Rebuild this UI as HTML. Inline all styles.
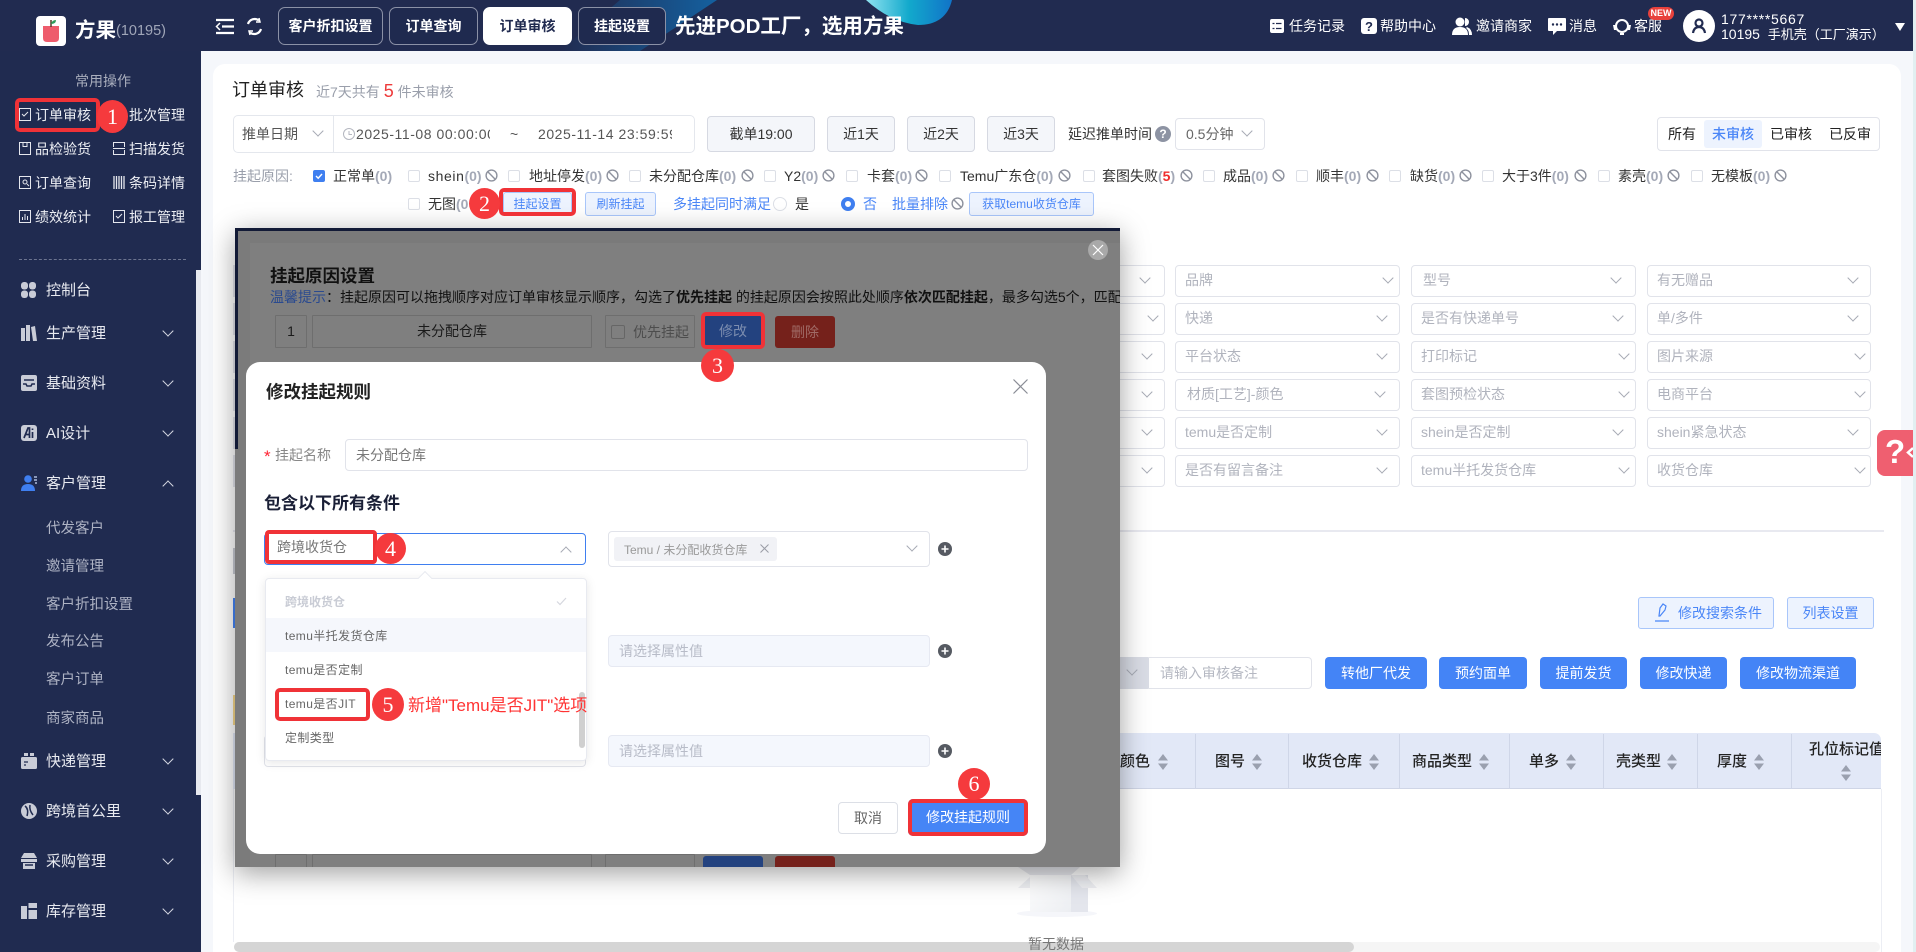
<!DOCTYPE html>
<html lang="zh-CN"><head><meta charset="utf-8"><title>订单审核</title>
<style>
*{box-sizing:border-box;margin:0;padding:0}
html,body{width:1916px;height:952px;overflow:hidden;background:#f5f7fb;font-family:"Liberation Sans","Noto Sans CJK SC",sans-serif;font-size:14px;color:#333}
#root{position:absolute;left:0;top:0;width:1916px;height:952px;overflow:hidden}
.a{position:absolute}
.t{position:absolute;white-space:nowrap;line-height:20px;height:20px}
em{font-style:normal;color:#a4a9b7;font-weight:700}
em.r{color:#f02d2d}
.ch{position:absolute;width:8px;height:8px;border-right:1px solid #a6aab4;border-bottom:1px solid #a6aab4;transform:rotate(45deg)}
.ch.w{border-color:#d5d8e2;border-width:1.5px}
.ch.u{transform:rotate(225deg)}
.side{color:#e8eaf0}
.menu{font-size:15px;left:46px;color:#e8eaf0;margin-top:1px}
.sub{left:46px;color:#aeb3c4;font-size:14.5px;margin-top:1px}
.qk{color:#eceef3}
.tab{position:absolute;top:7px;height:38px;border:1px solid #8b91a6;border-radius:7px;background:#1f2a4f;color:#fff;font-weight:700;text-align:center;line-height:36px}
.hd{color:#fff;top:16px}
.cb{position:absolute;width:12px;height:12px;border:1px solid #dcdfe6;border-radius:2px;background:#fff;top:4px}
.ban{position:absolute;width:13px;height:13px;top:3px}
.btn{position:absolute;top:116px;height:36px;background:#f4f6fa;border:1px solid #d6d9e2;border-radius:4px;text-align:center;line-height:34px;color:#333}
.lb{position:absolute;border:1px solid #a9c6fa;background:#edf3fe;border-radius:3px;color:#4a86f7;text-align:center}
.sel{position:absolute;height:32px;background:#fff;border:1px solid #e1e3ea;border-radius:4px;line-height:29px;padding-left:9px;color:#b0b3bd}
.bb{position:absolute;top:657px;height:32px;background:#4484f6;border-radius:4px;color:#fff;text-align:center;line-height:32px}
.th{top:752px;color:#222;font-weight:500;font-size:15px}
.sep{position:absolute;top:734px;width:1px;height:55px;background:#cfd6e8}
.so{position:absolute;width:10px;height:16px;top:754px}
.red{position:absolute;border:4px solid #f03237;border-radius:5px}
.num{position:absolute;background:#f53a3d;border-radius:50%;color:#fff;font-family:"Liberation Serif",serif;text-align:center;font-size:22px}
.box{position:absolute;border:1px solid #6e6e6e;text-align:center;color:#1a1a1a;line-height:31px;border-radius:1px}
.ph{position:absolute;left:608px;width:322px;height:32px;background:#f4f7fd;border:1px solid #e6e9f2;border-radius:4px;color:#b8bcc8;line-height:30px;padding-left:10px}
.pl{position:absolute;left:938px;width:14px;height:14px}
.op{position:absolute;left:285px;color:#666;font-size:12px;letter-spacing:.4px}
</style></head><body><div id="root">
<svg width="0" height="0" style="position:absolute">
<symbol id="ban" viewBox="0 0 13 13"><circle cx="6.5" cy="6.5" r="5.4" fill="none" stroke="#8e929e" stroke-width="1.4"/><path d="M2.8 2.8l7.4 7.4" stroke="#8e929e" stroke-width="1.4"/></symbol>
<symbol id="so" viewBox="0 0 10 16"><path d="M5 0l5 6.500H0zM5 16L0 9.500h10z" fill="#9aa0af"/></symbol>
<symbol id="pl" viewBox="0 0 14 14"><circle cx="7" cy="7" r="7" fill="#565a62"/><path d="M7 3.500v7M3.500 7h7" stroke="#fff" stroke-width="1.600"/></symbol>
</svg>

<!-- header -->
<div class="a" style="left:0;top:0;width:1913px;height:51px;background:#212b50"></div>
<svg class="a" style="left:0;top:0" width="1000" height="51"><defs>
<linearGradient id="g1" x1="0" x2="1" y1="0" y2="0"><stop offset="0" stop-color="#212b50"/><stop offset="1" stop-color="#14609f"/></linearGradient>
<linearGradient id="g2" x1="0" x2="1" y1="0" y2="0"><stop offset="0" stop-color="#8fe3f0"/><stop offset=".5" stop-color="#12a9cc"/><stop offset="1" stop-color="#1173c8"/></linearGradient></defs>
<polygon points="560,51 640,51 717,0 620,0" fill="url(#g1)"/>
<path d="M866 0Q890 22 918 25Q946 25 952 0Z" fill="url(#g2)"/></svg>
<div class="a" style="left:1913px;top:0;width:3px;height:952px;background:#e2eff1"></div>

<!-- sidebar -->
<div class="a" style="left:0;top:51px;width:201px;height:901px;background:#202b50"></div>
<div class="a" style="left:196px;top:270px;width:5px;height:525px;background:#e7e9ef"></div>

<!-- logo -->
<svg class="a" style="left:36px;top:16px" width="30" height="30"><rect width="30" height="30" rx="4" fill="#fff"/><path d="M7 10h16v12q0 4-4 4h-8q-4 0-4-4z" fill="#ee5c6c"/><path d="M15 11V4" stroke="#5a3a2a" stroke-width="1.500"/><path d="M15 8q1-4 5-4q0 4-5 4z" fill="#2f9e5b"/></svg>
<div class="t" style="left:75px;top:21px;font-size:20.500px;font-weight:700;color:#fff">方果</div>
<div class="t" style="left:116px;top:21px;color:#a0a6b8;font-size:14.5px">(10195)</div>

<!-- header icons -->
<svg class="a" style="left:215px;top:18px" width="19" height="17" fill="none" stroke="#fff" stroke-width="2.200"><path d="M1 2h18M7 8.500h12M1 15h18"/><path d="M5 5L1.500 8.500 5 12" stroke-width="1.500"/></svg>
<svg class="a" style="left:245px;top:17px" width="19" height="19" fill="none" stroke="#fff" stroke-width="2.200"><path d="M3 7a7 7 0 0 1 11-3.500"/><path d="M16 12a7 7 0 0 1-11 3.500"/><path d="M14 1l1 4-4 0" stroke-width="1.500"/><path d="M5 18l-1-4 4 0" stroke-width="1.500"/></svg>
<div class="tab" style="left:278px;width:105px">客户折扣设置</div>
<div class="tab" style="left:389px;width:89px">订单查询</div>
<div class="tab" style="left:483px;width:89px;background:#fff;color:#212b50;border-color:#fff">订单审核</div>
<div class="tab" style="left:578px;width:88px">挂起设置</div>
<div class="t" style="left:675px;top:16px;font-size:20.500px;line-height:22px;height:22px;color:#fff;font-weight:700">先进POD工厂，选用方果</div>

<svg class="a" style="left:1270px;top:19px" width="14" height="14"><rect width="14" height="14" rx="2" fill="#fff"/><path d="M2.500 4.500h2M6 4.500h5.500M2.500 9.500h2M6 9.500h5.500" stroke="#212b50" stroke-width="1.300"/></svg>
<div class="t hd" style="left:1289px">任务记录</div>
<svg class="a" style="left:1361px;top:18px" width="16" height="16"><rect width="16" height="16" rx="3" fill="#fff"/></svg>
<div class="t" style="left:1365px;top:17px;color:#212b50;font-weight:700;font-size:13px">?</div>
<div class="t hd" style="left:1380px">帮助中心</div>
<svg class="a" style="left:1452px;top:17px" width="20" height="18" fill="#fff"><circle cx="8" cy="5" r="4.500"/><path d="M0 18q0-8 8-8t8 8z"/><path d="M13 1a4 4 0 0 1 0 8M15 10q5 2 5 8h-3q0-5-3-7z"/></svg>
<div class="t hd" style="left:1476px">邀请商家</div>
<svg class="a" style="left:1548px;top:18px" width="18" height="18"><path d="M1 0h16q1 0 1 1v11q0 1-1 1h-8l-4 4v-4H1q-1 0-1-1V1q0-1 1-1z" fill="#fff"/><circle cx="5" cy="6.500" r="1.200" fill="#212b50"/><circle cx="9" cy="6.500" r="1.200" fill="#212b50"/><circle cx="13" cy="6.500" r="1.200" fill="#212b50"/></svg>
<div class="t hd" style="left:1569px">消息</div>
<svg class="a" style="left:1613px;top:18px" width="18" height="18" fill="none" stroke="#fff" stroke-width="2"><circle cx="9" cy="8" r="6"/><path d="M0 7h3v5H1zM15 7h3l-1 5h-2z" fill="#fff" stroke="none"/><path d="M7 16h4"/></svg>
<div class="t hd" style="left:1634px">客服</div>
<div class="a" style="left:1648px;top:7px;width:26px;height:13px;background:#e8413c;border-radius:7px;color:#fff;font-size:9px;font-weight:700;text-align:center;line-height:13px">NEW</div>
<div class="a" style="left:1683px;top:10px;width:32px;height:32px;border-radius:50%;background:#fff"></div>
<svg class="a" style="left:1691px;top:17px" width="16" height="17" fill="none" stroke="#212b50" stroke-width="2.200"><circle cx="8" cy="6" r="3.500"/><path d="M2 16q1-6 6-6t6 6"/></svg>
<div class="t hd" style="left:1721px;top:9px;letter-spacing:.7px">177****5667</div>
<div class="t hd" style="left:1721px;top:24px">10195&nbsp;&nbsp;<span style="font-size:13px">手机壳（工厂演示）</span></div>
<svg class="a" style="left:1895px;top:23px" width="10" height="9"><path d="M0 0h10L5 8z" fill="#fff"/></svg>

<!-- quick ops -->
<div class="t" style="left:75px;top:71px;color:#a9aebd">常用操作</div>
<div class="t qk" style="left:35px;top:105px">订单审核</div><div class="t qk" style="left:129px;top:105px">批次管理</div>
<div class="t qk" style="left:35px;top:139px">品检验货</div><div class="t qk" style="left:129px;top:139px">扫描发货</div>
<div class="t qk" style="left:35px;top:173px">订单查询</div><div class="t qk" style="left:129px;top:173px">条码详情</div>
<div class="t qk" style="left:35px;top:207px">绩效统计</div><div class="t qk" style="left:129px;top:207px">报工管理</div>
<svg class="a" style="left:19px;top:108px" width="12" height="13" fill="none" stroke="#e5e7ee"><rect x=".5" y=".5" width="11" height="12"/><path d="M3 6l2 2 4-4"/></svg>
<svg class="a" style="left:19px;top:142px" width="12" height="13" fill="none" stroke="#e5e7ee"><rect x=".5" y=".5" width="11" height="12"/><path d="M4 .5v4h4v-4"/></svg>
<svg class="a" style="left:113px;top:142px" width="12" height="13" fill="none" stroke="#e5e7ee"><path d="M.5 5V.5h11V5M.5 8v4.500h11V8M0 6.500h12"/></svg>
<svg class="a" style="left:19px;top:176px" width="12" height="13" fill="none" stroke="#e5e7ee"><rect x=".5" y=".5" width="11" height="12"/><circle cx="6" cy="6" r="2"/><path d="M8 8l2 2"/></svg>
<svg class="a" style="left:113px;top:176px" width="12" height="13" stroke="#e5e7ee"><path d="M1 0v13M3.500 0v13M6 0v13M8.500 0v13M11 0v13" stroke-width="1.300"/></svg>
<svg class="a" style="left:19px;top:210px" width="12" height="13" fill="none" stroke="#e5e7ee"><rect x=".5" y=".5" width="11" height="12"/><path d="M3.500 10V7M6 10V4M8.500 10V6"/></svg>
<svg class="a" style="left:113px;top:210px" width="12" height="13" fill="none" stroke="#e5e7ee"><rect x=".5" y=".5" width="11" height="12"/><path d="M3 6l2 2 4-4"/></svg>
<div class="a" style="left:19px;top:259px;width:167px;border-top:1px dashed #6d7590"></div>

<!-- side menu -->
<svg class="a" style="left:21px;top:282px" width="15" height="16" fill="#c9ccd7"><rect width="7" height="7.500" rx="3"/><rect x="8" width="7" height="7.500" rx="3"/><rect y="8.500" width="7" height="7.500" rx="3"/><rect x="8" y="8.500" width="7" height="7.500" rx="3"/></svg>
<div class="t menu" style="top:280px">控制台</div>
<svg class="a" style="left:21px;top:325px" width="16" height="16" fill="#c9ccd7"><path d="M0 3h4v13H0zM5 0h4v16H5zM10 2l4-1 2 15h-4z"/></svg>
<div class="t menu" style="top:323px">生产管理</div><div class="ch w" style="left:164px;top:327px"></div>
<svg class="a" style="left:21px;top:375px" width="16" height="16" fill="#c9ccd7"><rect width="16" height="16" rx="2"/><path d="M3 5h10M2 9h3l1 2h4l1-2h3" fill="none" stroke="#202b50" stroke-width="1.500"/></svg>
<div class="t menu" style="top:373px">基础资料</div><div class="ch w" style="left:164px;top:377px"></div>
<svg class="a" style="left:21px;top:425px" width="16" height="16"><rect width="16" height="16" rx="3" fill="#c9ccd7"/><path d="M3 13L7 3h1.500v10M4.500 9.500h4M11.500 7v6M11.500 3.500v1.500" fill="none" stroke="#202b50" stroke-width="1.700"/></svg>
<div class="t menu" style="top:423px">AI设计</div><div class="ch w" style="left:164px;top:427px"></div>
<svg class="a" style="left:21px;top:475px" width="17" height="16" fill="#3f7ff0"><circle cx="7" cy="4" r="3.800"/><path d="M0 16q0-7 7-7t7 7z"/><path d="M13 2h3M13 5h3M14 8h2" stroke="#c9d9f8" stroke-width="1.200"/></svg>
<div class="t menu" style="top:473px">客户管理</div><div class="ch w u" style="left:164px;top:482px"></div>
<div class="t sub" style="top:518px">代发客户</div>
<div class="t sub" style="top:556px">邀请管理</div>
<div class="t sub" style="top:594px">客户折扣设置</div>
<div class="t sub" style="top:631px">发布公告</div>
<div class="t sub" style="top:669px">客户订单</div>
<div class="t sub" style="top:708px">商家商品</div>
<svg class="a" style="left:21px;top:753px" width="16" height="16" fill="#c9ccd7"><rect y="4" width="16" height="12" rx="1.500"/><rect x="3" width="4" height="3"/><rect x="9" width="4" height="3"/><path d="M3 9h4M3 12h2" stroke="#202b50" stroke-width="1.300"/></svg>
<div class="t menu" style="top:751px">快递管理</div><div class="ch w" style="left:164px;top:755px"></div>
<svg class="a" style="left:21px;top:803px" width="16" height="16"><circle cx="8" cy="8" r="8" fill="#c9ccd7"/><path d="M4 3q4 3 2 10M9 2q-1 5 3 10" fill="none" stroke="#202b50" stroke-width="1.500"/></svg>
<div class="t menu" style="top:801px">跨境首公里</div><div class="ch w" style="left:164px;top:805px"></div>
<svg class="a" style="left:21px;top:853px" width="16" height="16" fill="#c9ccd7"><path d="M3 0h10l3 5H0z"/><rect y="6" width="16" height="3"/><path d="M2 10h12v6H2z"/><path d="M4 12h8" stroke="#202b50" stroke-width="1.500"/></svg>
<div class="t menu" style="top:851px">采购管理</div><div class="ch w" style="left:164px;top:855px"></div>
<svg class="a" style="left:21px;top:903px" width="16" height="16" fill="#c9ccd7"><rect y="3" width="6" height="13"/><rect x="7.500" width="8.500" height="5"/><rect x="7.500" y="7" width="8.500" height="9"/></svg>
<div class="t menu" style="top:901px">库存管理</div><div class="ch w" style="left:164px;top:905px"></div>

<!-- main card -->
<div class="a" style="left:213px;top:64px;width:1688px;height:888px;background:#fff;border-radius:12px 12px 0 0"></div>
<div class="t" style="left:232px;top:79px;font-size:18px;line-height:22px;height:22px;color:#222">订单审核</div>
<div class="t" style="left:316px;top:81px;color:#9a9fab">近7天共有 <span style="color:#ee3a3a;font-size:18px">5</span> 件未审核</div>

<!-- date row -->
<div class="a" style="left:233px;top:115px;width:462px;height:38px;border:1px solid #e4e7ed;border-radius:5px"></div>
<div class="a" style="left:333px;top:116px;width:1px;height:36px;background:#e4e7ed"></div>
<div class="t" style="left:242px;top:124px;color:#555">推单日期</div>
<div class="ch" style="left:314px;top:127px"></div>
<svg class="a" style="left:343px;top:128px" width="12" height="12" fill="none" stroke="#b4b7c0"><circle cx="6" cy="6" r="5.500"/><path d="M6 3v3.500h3"/></svg>
<div class="t" style="left:356px;top:124px;width:134px;overflow:hidden;color:#555;letter-spacing:.55px">2025-11-08 00:00:00</div>
<div class="t" style="left:510px;top:124px;color:#555">~</div>
<div class="t" style="left:538px;top:124px;width:134px;overflow:hidden;color:#555;letter-spacing:.55px">2025-11-14 23:59:59</div>
<div class="btn" style="left:707px;width:108px">截单19:00</div>
<div class="btn" style="left:827px;width:68px">近1天</div>
<div class="btn" style="left:907px;width:68px">近2天</div>
<div class="btn" style="left:987px;width:68px">近3天</div>
<div class="t" style="left:1068px;top:124px">延迟推单时间</div>
<div class="a" style="left:1155px;top:126px;width:16px;height:16px;border-radius:50%;background:#8d93a3;color:#fff;font-size:12px;font-weight:700;text-align:center;line-height:16px">?</div>
<div class="a" style="left:1175px;top:118px;width:90px;height:32px;border:1px solid #e1e3ea;border-radius:4px;line-height:30px;padding-left:10px;color:#666">0.5分钟</div>
<div class="ch" style="left:1243px;top:127px"></div>
<div class="a" style="left:1657px;top:117px;width:223px;height:34px;border:1px solid #e1e3ea;border-radius:4px"></div>
<div class="a" style="left:1704px;top:120px;width:58px;height:28px;background:#edf3fe;border-radius:3px"></div>
<div class="t" style="left:1668px;top:124px;color:#222">所有</div>
<div class="t" style="left:1712px;top:124px;color:#4a86f7;font-weight:500">未审核</div>
<div class="t" style="left:1770px;top:124px;color:#222">已审核</div>
<div class="t" style="left:1829px;top:124px;color:#222">已反审</div>

<!-- reason row -->
<div class="a" style="left:0;top:166px;width:1916px;height:20px">
<div class="t" style="left:233px;color:#9a9fab">挂起原因:</div>
<div class="cb" style="left:313px;background:#3f7ff0;border-color:#3f7ff0"></div>
<svg class="a" style="left:313px;top:4px" width="12" height="12" fill="none" stroke="#fff" stroke-width="1.400"><path d="M3 6l2.200 2.200L9 4"/></svg>
<div class="t" style="left:333px">正常单<em>(0)</em></div>
<i class="cb" style="left:408px"></i><div class="t" style="left:428px"><span style="letter-spacing:.6px">shein</span><em>(0)</em></div><svg class="ban" style="left:485px"><use href="#ban"/></svg>
<i class="cb" style="left:508px"></i><div class="t" style="left:529px">地址停发<em>(0)</em></div><svg class="ban" style="left:606px"><use href="#ban"/></svg>
<i class="cb" style="left:629px"></i><div class="t" style="left:649px">未分配仓库<em>(0)</em></div><svg class="ban" style="left:741px"><use href="#ban"/></svg>
<i class="cb" style="left:764px"></i><div class="t" style="left:784px">Y2<em>(0)</em></div><svg class="ban" style="left:822px"><use href="#ban"/></svg>
<i class="cb" style="left:846px"></i><div class="t" style="left:867px">卡套<em>(0)</em></div><svg class="ban" style="left:915px"><use href="#ban"/></svg>
<i class="cb" style="left:939px"></i><div class="t" style="left:960px">Temu广东仓<em>(0)</em></div><svg class="ban" style="left:1058px"><use href="#ban"/></svg>
<i class="cb" style="left:1083px"></i><div class="t" style="left:1102px">套图失败<em>(</em><em class="r">5</em><em>)</em></div><svg class="ban" style="left:1180px"><use href="#ban"/></svg>
<i class="cb" style="left:1203px"></i><div class="t" style="left:1223px">成品<em>(0)</em></div><svg class="ban" style="left:1272px"><use href="#ban"/></svg>
<i class="cb" style="left:1296px"></i><div class="t" style="left:1316px">顺丰<em>(0)</em></div><svg class="ban" style="left:1366px"><use href="#ban"/></svg>
<i class="cb" style="left:1389px"></i><div class="t" style="left:1410px">缺货<em>(0)</em></div><svg class="ban" style="left:1459px"><use href="#ban"/></svg>
<i class="cb" style="left:1482px"></i><div class="t" style="left:1502px">大于3件<em>(0)</em></div><svg class="ban" style="left:1574px"><use href="#ban"/></svg>
<i class="cb" style="left:1598px"></i><div class="t" style="left:1618px">素壳<em>(0)</em></div><svg class="ban" style="left:1667px"><use href="#ban"/></svg>
<i class="cb" style="left:1691px"></i><div class="t" style="left:1711px">无模板<em>(0)</em></div><svg class="ban" style="left:1774px"><use href="#ban"/></svg>
</div>
<div class="a" style="left:0;top:194px;width:1916px;height:20px">
<i class="cb" style="left:408px"></i><div class="t" style="left:428px">无图<em>(0</em></div>
<div class="t" style="left:673px;color:#4a86f7">多挂起同时满足</div>
<div class="a" style="left:773px;top:3px;width:14px;height:14px;border:1px solid #dcdfe6;border-radius:50%"></div>
<div class="t" style="left:795px">是</div>
<div class="a" style="left:841px;top:3px;width:14px;height:14px;border:4.500px solid #3f7ff0;border-radius:50%;background:#fff"></div>
<div class="t" style="left:863px;color:#4a86f7">否</div>
<div class="t" style="left:892px;color:#4a86f7">批量排除</div>
<svg class="ban" style="left:951px"><use href="#ban"/></svg>
</div>
<div class="lb" style="left:503px;top:192px;width:69px;height:24px;font-size:12px;line-height:22px">挂起设置</div>
<div class="lb" style="left:585px;top:192px;width:71px;height:24px;font-size:12px;line-height:22px">刷新挂起</div>
<div class="lb" style="left:969px;top:192px;width:125px;height:24px;font-size:12px;line-height:22px">获取temu收货仓库</div>

<!-- filters col0 -->
<div class="sel" style="left:1000px;top:265px;width:165px"></div><div class="ch" style="left:1141px;top:274px"></div>
<div class="sel" style="left:1000px;top:303px;width:165px"></div><div class="ch" style="left:1149px;top:312px"></div>
<div class="sel" style="left:1000px;top:341px;width:165px"></div><div class="ch" style="left:1143px;top:350px"></div>
<div class="sel" style="left:1000px;top:379px;width:165px"></div><div class="ch" style="left:1143px;top:388px"></div>
<div class="sel" style="left:1000px;top:417px;width:165px"></div><div class="ch" style="left:1143px;top:426px"></div>
<div class="sel" style="left:1000px;top:455px;width:165px"></div><div class="ch" style="left:1143px;top:464px"></div>
<!-- col1 -->
<div class="sel" style="left:1175px;top:265px;width:225px">品牌</div><div class="ch" style="left:1384px;top:274px"></div>
<div class="sel" style="left:1175px;top:303px;width:225px">快递</div><div class="ch" style="left:1378px;top:312px"></div>
<div class="sel" style="left:1175px;top:341px;width:225px">平台状态</div><div class="ch" style="left:1378px;top:350px"></div>
<div class="sel" style="left:1175px;top:379px;width:225px;padding-left:11px">材质[工艺]-颜色</div><div class="ch" style="left:1376px;top:388px"></div>
<div class="sel" style="left:1175px;top:417px;width:225px">temu是否定制</div><div class="ch" style="left:1378px;top:426px"></div>
<div class="sel" style="left:1175px;top:455px;width:225px">是否有留言备注</div><div class="ch" style="left:1378px;top:464px"></div>
<!-- col2 -->
<div class="sel" style="left:1411px;top:265px;width:225px;padding-left:11px">型号</div><div class="ch" style="left:1612px;top:274px"></div>
<div class="sel" style="left:1411px;top:303px;width:225px">是否有快递单号</div><div class="ch" style="left:1614px;top:312px"></div>
<div class="sel" style="left:1411px;top:341px;width:225px">打印标记</div><div class="ch" style="left:1620px;top:350px"></div>
<div class="sel" style="left:1411px;top:379px;width:225px">套图预检状态</div><div class="ch" style="left:1620px;top:388px"></div>
<div class="sel" style="left:1411px;top:417px;width:225px">shein是否定制</div><div class="ch" style="left:1614px;top:426px"></div>
<div class="sel" style="left:1411px;top:455px;width:225px">temu半托发货仓库</div><div class="ch" style="left:1620px;top:464px"></div>
<!-- col3 -->
<div class="sel" style="left:1647px;top:265px;width:224px">有无赠品</div><div class="ch" style="left:1849px;top:274px"></div>
<div class="sel" style="left:1647px;top:303px;width:224px">单/多件</div><div class="ch" style="left:1849px;top:312px"></div>
<div class="sel" style="left:1647px;top:341px;width:224px">图片来源</div><div class="ch" style="left:1856px;top:350px"></div>
<div class="sel" style="left:1647px;top:379px;width:224px">电商平台</div><div class="ch" style="left:1856px;top:388px"></div>
<div class="sel" style="left:1647px;top:417px;width:224px">shein紧急状态</div><div class="ch" style="left:1849px;top:426px"></div>
<div class="sel" style="left:1647px;top:455px;width:224px">收货仓库</div><div class="ch" style="left:1856px;top:464px"></div>

<!-- help tab -->
<div class="a" style="left:1877px;top:430px;width:36px;height:46px;background:#ef5f70;border-radius:8px 0 0 8px"></div>
<div class="t" style="left:1885px;top:442px;color:#fff;font-weight:700;font-size:33px">?</div>
<svg class="a" style="left:1906px;top:447px" width="7" height="11" fill="none" stroke="#fff" stroke-width="2.500"><path d="M7 1L2 5.500l5 4.500"/></svg>

<div class="a" style="left:233px;top:530px;width:1651px;height:2px;background:#e8e9f0"></div>

<!-- left peeks -->
<div class="a" style="left:233px;top:265px;width:2px;height:32px;background:#e3e5ec"></div>
<div class="a" style="left:233px;top:303px;width:2px;height:32px;background:#e3e5ec"></div>
<div class="a" style="left:233px;top:341px;width:2px;height:32px;background:#e3e5ec"></div>
<div class="a" style="left:233px;top:379px;width:2px;height:32px;background:#e3e5ec"></div>
<div class="a" style="left:233px;top:417px;width:2px;height:32px;background:#e3e5ec"></div>
<div class="a" style="left:233px;top:455px;width:2px;height:32px;background:#e3e5ec"></div>
<div class="a" style="left:233px;top:548px;width:2px;height:26px;background:#c9ccd4"></div>
<div class="a" style="left:233px;top:598px;width:2px;height:30px;background:#4484f6"></div>
<div class="a" style="left:233px;top:695px;width:2px;height:30px;background:#f7d88a"></div>
<div class="a" style="left:233px;top:733px;width:2px;height:56px;background:#e2e8f7"></div>
<div class="a" style="left:233px;top:789px;width:1px;height:153px;background:#eceef4"></div>

<!-- action buttons -->
<div class="lb" style="left:1638px;top:597px;width:136px;height:32px;line-height:30px;padding-left:28px">修改搜索条件</div>
<svg class="a" style="left:1654px;top:603px" width="16" height="20" fill="none" stroke="#4a86f7" stroke-width="1.200"><path d="M5 13l1-8 3-4 3 2-1 4-5 6zM1 18h14"/></svg>
<div class="lb" style="left:1787px;top:597px;width:87px;height:32px;line-height:30px">列表设置</div>
<div class="a" style="left:1100px;top:657px;width:49px;height:32px;background:#d9dce5;border-radius:0 0 0 0"></div>
<div class="ch" style="left:1128px;top:666px"></div>
<div class="a" style="left:1148px;top:657px;width:164px;height:32px;border:1px solid #e1e3ea;border-left:0;border-radius:0 4px 4px 0;line-height:30px;padding-left:12px;color:#b5b8c2">请输入审核备注</div>
<div class="bb" style="left:1325px;width:102px">转他厂代发</div>
<div class="bb" style="left:1439px;width:88px">预约面单</div>
<div class="bb" style="left:1540px;width:87px">提前发货</div>
<div class="bb" style="left:1640px;width:87px">修改快递</div>
<div class="bb" style="left:1740px;width:116px">修改物流渠道</div>

<!-- table -->
<div class="a" style="left:1000px;top:733px;width:881px;height:56px;background:#e2e8f7;border-bottom:1px solid #cfd5e6;border-radius:0 7px 0 0;overflow:hidden"></div>
<i class="sep" style="left:1195px"></i><i class="sep" style="left:1288px"></i><i class="sep" style="left:1399px"></i><i class="sep" style="left:1509px"></i><i class="sep" style="left:1603px"></i><i class="sep" style="left:1697px"></i><i class="sep" style="left:1791px"></i>
<div class="t th" style="left:1120px">颜色</div><svg class="so" style="left:1158px"><use href="#so"/></svg>
<div class="t th" style="left:1215px">图号</div><svg class="so" style="left:1252px"><use href="#so"/></svg>
<div class="t th" style="left:1302px">收货仓库</div><svg class="so" style="left:1369px"><use href="#so"/></svg>
<div class="t th" style="left:1412px">商品类型</div><svg class="so" style="left:1479px"><use href="#so"/></svg>
<div class="t th" style="left:1529px">单多</div><svg class="so" style="left:1566px"><use href="#so"/></svg>
<div class="t th" style="left:1616px">壳类型</div><svg class="so" style="left:1667px"><use href="#so"/></svg>
<div class="t th" style="left:1717px">厚度</div><svg class="so" style="left:1754px"><use href="#so"/></svg>
<div class="t th" style="left:1809px;top:740px;width:72px;overflow:hidden">孔位标记值</div><svg class="so" style="left:1841px;top:765px"><use href="#so"/></svg>
<div class="a" style="left:1881px;top:789px;width:1px;height:163px;background:#eceef4"></div>

<!-- empty state -->
<svg class="a" style="left:1010px;top:860px" width="100" height="62"><defs><linearGradient id="g3" x1="0" x2="1" y1="0" y2="1"><stop offset="0" stop-color="#fff"/><stop offset="1" stop-color="#eceef2"/></linearGradient></defs><ellipse cx="47" cy="53.500" rx="40" ry="3.500" fill="#f5f6fa"/><path d="M20 15h41v37H20z" fill="url(#g3)"/><path d="M61 15h17v37H61z" fill="#e4e6ed"/><path d="M20 17L8 28h12zM61 15l11 13h15L75 15z" fill="#eff0f4"/><path d="M8 7h62l-9 8H20z" fill="#e8e9ee"/></svg>
<div class="a" style="left:234px;top:942px;width:1646px;height:10px;background:#f5f5f5;border-radius:5px"></div>
<div class="a" style="left:234px;top:942px;width:1120px;height:10px;background:#d5d5d5;border-radius:5px"></div>
<div class="t" style="left:1028px;top:934px;color:#777">暂无数据</div>

<!-- overlay screenshot -->
<div class="a" style="left:235px;top:228px;width:885px;height:639px;box-shadow:0 6px 26px rgba(0,0,0,.38)"></div>
<div class="a" style="left:0;top:0;width:1916px;height:952px;clip-path:inset(228px 796px 85px 235px)">
<div class="a" style="left:235px;top:228px;width:885px;height:639px;background:#7f7f7f"></div>
<div class="a" style="left:235px;top:231px;width:885px;height:12px;background:#7a7a7a"></div>
<div class="a" style="left:235px;top:231px;width:15px;height:636px;background:#7b7b7b"></div>
<div class="a" style="left:235px;top:228px;width:885px;height:3px;background:#121a36"></div>
<div class="a" style="left:235px;top:228px;width:3px;height:221px;background:#121a36"></div>
<div class="t" style="left:270px;top:266px;font-size:17.500px;font-weight:700;color:#111">挂起原因设置</div>
<div class="t" style="left:270px;top:287px;color:#111"><span style="color:#2a4a8f">温馨提示</span>：挂起原因可以拖拽顺序对应订单审核显示顺序，勾选了<b>优先挂起</b> 的挂起原因会按照此处顺序<b>依次匹配挂起</b>，最多勾选5个，匹配优先级从上到下</div>
<div class="box" style="left:275px;top:315px;width:32px;height:33px">1</div>
<div class="box" style="left:312px;top:315px;width:280px;height:33px">未分配仓库</div>
<div class="box" style="left:605px;top:315px;width:90px;height:33px"></div>
<div class="a" style="left:611px;top:325px;width:14px;height:14px;border:1px solid #666;border-radius:2px"></div>
<div class="t" style="left:633px;top:322px;color:#4d4d4d">优先挂起</div>
<div class="a" style="left:704px;top:316px;width:58px;height:31px;background:#23427f;color:#7c8daf;text-align:center;line-height:31px">修改</div>
<div class="a" style="left:775px;top:316px;width:60px;height:32px;background:#75211b;color:#a06b66;text-align:center;line-height:32px;border-radius:3px">删除</div>
<div class="a" style="left:1088px;top:240px;width:20px;height:20px;border-radius:50%;background:#a9a9a9"></div>
<svg class="a" style="left:1092px;top:244px" width="12" height="12" stroke="#fff" stroke-width="1.200"><path d="M1 1l10 10M11 1L1 11"/></svg>
<div class="box" style="left:275px;top:854px;width:32px;height:30px"></div>
<div class="box" style="left:312px;top:854px;width:280px;height:30px"></div>
<div class="box" style="left:605px;top:854px;width:90px;height:30px"></div>
<div class="a" style="left:703px;top:856px;width:60px;height:30px;background:#23427f;border-radius:3px"></div>
<div class="a" style="left:775px;top:856px;width:60px;height:30px;background:#75211b;border-radius:3px"></div>
</div>

<!-- dialog -->
<div class="a" style="left:246px;top:362px;width:800px;height:492px;background:#fff;border-radius:14px"></div>
<div class="t" style="left:266px;top:382px;font-size:17.500px;font-weight:700;color:#222">修改挂起规则</div>
<svg class="a" style="left:1013px;top:379px" width="15" height="15" stroke="#8a8d96" stroke-width="1.200"><path d="M.5.5l14 14M14.500.5l-14 14"/></svg>
<div class="t" style="left:264px;top:447px;color:#f23;font-size:17px">*</div>
<div class="t" style="left:275px;top:445px;color:#888">挂起名称</div>
<div class="a" style="left:345px;top:439px;width:683px;height:32px;border:1px solid #e1e3ea;border-radius:4px;line-height:30px;padding-left:10px;color:#777">未分配仓库</div>
<div class="t" style="left:264px;top:494px;font-size:17px;font-weight:700;color:#1a1f36">包含以下所有条件</div>

<div class="a" style="left:264px;top:533px;width:322px;height:32px;border:1px solid #3f7ff0;border-radius:4px"></div>
<div class="ch u" style="left:562px;top:548px"></div>
<div class="a" style="left:608px;top:531px;width:322px;height:36px;border:1px solid #e1e3ea;border-radius:4px"></div>
<div class="a" style="left:614px;top:537px;width:163px;height:24px;background:#f1f2f6;border-radius:3px"></div>
<div class="t" style="left:624px;top:540px;color:#999;font-size:12px">Temu / 未分配收货仓库</div>
<svg class="a" style="left:760px;top:544px" width="9" height="9" stroke="#9a9da6"><path d="M.5.5l8 8M8.500.5l-8 8"/></svg>
<div class="ch" style="left:908px;top:542px"></div>
<svg class="pl" style="top:542px"><use href="#pl"/></svg>

<div class="a" style="left:264px;top:735px;width:322px;height:32px;border:1px solid #e1e3ea;border-radius:4px"></div>
<div class="ph" style="top:635px">请选择属性值</div>
<svg class="pl" style="top:644px"><use href="#pl"/></svg>
<div class="ph" style="top:735px">请选择属性值</div>
<svg class="pl" style="top:744px"><use href="#pl"/></svg>

<!-- dropdown -->
<div class="a" style="left:265px;top:578px;width:322px;height:183px;background:#fff;border:1px solid #e8eaf0;border-radius:4px;box-shadow:0 2px 10px rgba(0,0,0,.1)"></div>
<div class="a" style="left:420px;top:573px;width:10px;height:10px;background:#fff;border-left:1px solid #e8eaf0;border-top:1px solid #e8eaf0;transform:rotate(45deg)"></div>
<div class="a" style="left:266px;top:618px;width:320px;height:34px;background:#f5f7fc"></div>
<div class="t" style="left:285px;top:592px;color:#c9ccd5;font-weight:700;font-size:12px">跨境收货仓</div>
<svg class="a" style="left:556px;top:597px" width="11" height="9" fill="none" stroke="#d5d7de" stroke-width="1.200"><path d="M1 4.500l3 3 6-6.500"/></svg>
<div class="t op" style="top:626px">temu半托发货仓库</div>
<div class="t op" style="top:660px">temu是否定制</div>
<div class="t op" style="top:694px">temu是否JIT</div>
<div class="t op" style="top:728px">定制类型</div>
<div class="a" style="left:579px;top:692px;width:6px;height:56px;background:#d0d0d0;border-radius:3px"></div>

<!-- footer -->
<div class="a" style="left:838px;top:802px;width:60px;height:32px;border:1px solid #dcdfe6;border-radius:4px;text-align:center;line-height:30px;color:#666">取消</div>
<div class="a" style="left:908px;top:799px;width:120px;height:37px;background:#4585f6;color:#fff;text-align:center;line-height:37px;border-radius:5px">修改挂起规则</div>

<!-- annotations -->
<div class="red" style="left:15px;top:98px;width:85px;height:34px"></div>
<div class="num" style="left:97px;top:100px;width:31px;height:33px;line-height:33px">1</div>
<div class="red" style="left:499px;top:188px;width:77px;height:28px"></div>
<div class="num" style="left:469px;top:188px;width:31px;height:31px;line-height:31px">2</div>
<div class="red" style="left:701px;top:312px;width:64px;height:37px"></div>
<div class="num" style="left:701px;top:349px;width:33px;height:33px;line-height:33px">3</div>
<div class="a" style="left:265px;top:530px;width:112px;height:34px;background:#fff;border:4px solid #f03237;border-radius:4px;line-height:26px;padding-left:8px;color:#777">跨境收货仓</div>
<div class="num" style="left:375px;top:533px;width:31px;height:31px;line-height:31px">4</div>
<div class="red" style="left:275px;top:688px;width:95px;height:33px"></div>
<div class="num" style="left:372px;top:688px;width:32px;height:33px;line-height:33px">5</div>
<div class="t" style="left:408px;top:696px;color:#f33;font-size:17px">新增"Temu是否JIT"选项</div>
<div class="red" style="left:908px;top:799px;width:120px;height:37px"></div>
<div class="num" style="left:958px;top:768px;width:32px;height:32px;line-height:32px">6</div>
</div></body></html>
